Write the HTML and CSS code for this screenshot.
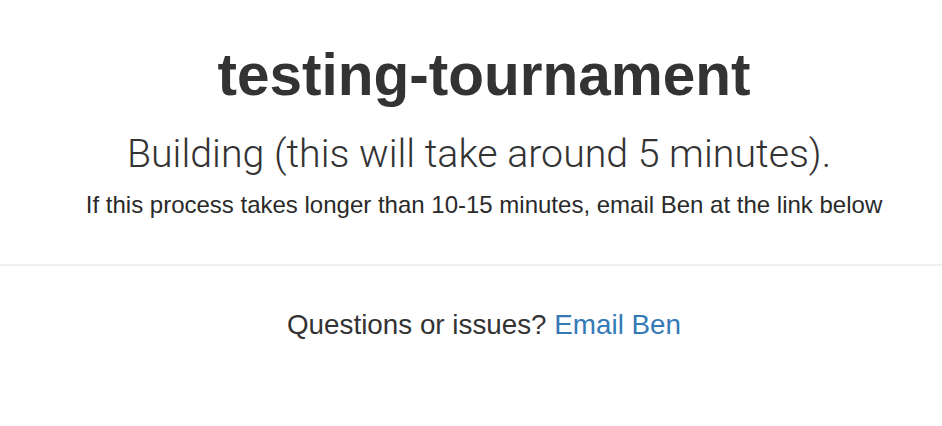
FILE: index.html
```html
<!DOCTYPE html>
<html>
<head>
<meta charset="utf-8">
<link rel="stylesheet" href="styles.css">
</head>
<body>
<main class="status">
  <h1 class="title">testing-tournament</h1>
  <p class="lead">Building (this will take around 5 minutes).</p>
  <p class="note">If this process takes longer than 10-15 minutes, email Ben at the link below</p>
</main>
<hr class="divider">
<footer class="footer">
  <p class="contact">Questions or issues? <a class="link" href="#">Email Ben</a></p>
</footer>
</body>
</html>
```

FILE: styles.css
```css
html, body {
  margin: 0;
  padding: 0;
  background: #fff;
}
body {
  font-family: "Liberation Sans", Arial, sans-serif;
  color: #333;
}
.status {
  display: flex;
  flex-direction: column;
  align-items: center;
  padding: 40px 0 0 26px;
}
.title {
  margin: 0;
  font-size: 58.5px;
  font-weight: 700;
  line-height: 70px;
  color: #333;
}
.lead {
  margin: 20px 0 0;
  padding-right: 10px;
  font-family: Roboto, "Liberation Sans", sans-serif;
  font-weight: 300;
  font-size: 39.3px;
  line-height: 48px;
}
.note {
  margin: 13px 0 0;
  font-size: 24px;
  line-height: 28px;
  color: #2a2a2a;
}
.divider {
  margin: 45px 0 0;
  border: 0;
  border-top: 2px solid #eee;
}
.footer {
  display: flex;
  justify-content: center;
  padding: 43px 0 0 26px;
}
.contact {
  margin: 0;
  font-size: 27.8px;
  line-height: 32px;
}
.link {
  color: #337ab7;
  text-decoration: none;
}
```
